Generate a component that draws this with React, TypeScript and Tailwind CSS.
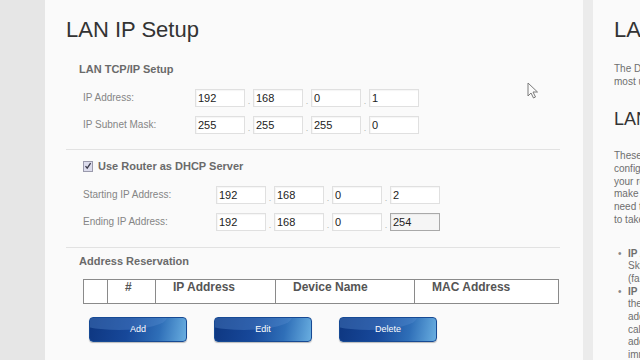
import React from "react";

// ── Data ────────────────────────────────────────────────────────────────

const FONT = { fontFamily: '"Liberation Sans", Arial, sans-serif' };

const lanRows = [
  { label: "IP Address:", values: ["192", "168", "0", "1"] },
  { label: "IP Subnet Mask:", values: ["255", "255", "255", "0"] },
];

const dhcpRows = [
  { label: "Starting IP Address:", values: ["192", "168", "0", "2"] },
  { label: "Ending IP Address:", values: ["192", "168", "0", "254"], focused: true },
];

const helpIntro = ["The Default LAN settings suit", "most users and rarely need edits."];

const helpLan = [
  "These settings are used to",
  "configure the LAN side of",
  "your router. Be sure you",
  "make a change only if you",
  "need to, and allow some time",
  "to take effect on your network.",
];

const helpBullets: { head: string; lines: string[] }[] = [
  {
    head: "IP Address. The LAN IP address",
    lines: ["Skip this unless you need it", "(factory default is 192.168.1.1)."],
  },
  {
    head: "IP Subnet Mask. The subnet mask",
    lines: [
      "the router uses. Combined with the",
      "address, it lets each device",
      "calculate which other IP",
      "addresses are local, so traffic",
      "immediately goes the right way.",
    ],
  },
];

// ── Pieces ──────────────────────────────────────────────────────────────

function IpField({ value, focused }: { value: string; focused?: boolean }) {
  return (
    <div
      className={`h-[18px] w-[50px] border pl-[2px] text-[11px] leading-[16px] text-[#222] shadow-[inset_1px_1px_1px_rgba(0,0,0,0.04)] ${
        focused ? "border-[#a9a9a9] bg-[#f5f5f5]" : "border-[#e0e0e0] bg-white"
      }`}
    >
      {value}
    </div>
  );
}

function IpRow({
  label,
  values,
  labelWidth,
  focused,
}: {
  label: string;
  values: string[];
  labelWidth: string;
  focused?: boolean;
}) {
  return (
    <div className="flex items-center">
      <div className={`${labelWidth} text-[10px] leading-[14px] text-[#858585]`}>{label}</div>
      <div className="flex items-end">
        {values.map((v, i) => (
          <React.Fragment key={i}>
            {i > 0 && <span className="w-[8px] text-center text-[9px] leading-[12px] text-[#b0b0b0]">.</span>}
            <IpField value={v} focused={focused && i === values.length - 1} />
          </React.Fragment>
        ))}
      </div>
    </div>
  );
}

function BlueButton({ label }: { label: string }) {
  return (
    <button className="relative h-[25px] w-[98px] overflow-hidden rounded-[4px] border border-[#174a94] bg-[linear-gradient(100deg,#0e3781_0%,#17489a_40%,#2f6fb8_72%,#69aee0_100%)] text-[9px] text-white shadow-[0_1px_1px_rgba(0,0,0,0.25)]">
      <span className="absolute left-[-20%] top-[-60%] h-[110%] w-[100%] rounded-[50%] bg-[#5c8fd0]/35" />
      <span className="relative">{label}</span>
    </button>
  );
}

function Cursor() {
  return (
    <svg className="absolute left-[527px] top-[82px]" width="12" height="17" viewBox="0 0 12 17">
      <path
        d="M1 1 L1 14 L4 11 L6.5 16 L8.5 15 L6 10 L10.5 10 Z"
        fill="#fafafa"
        stroke="#7a7a7a"
        strokeWidth="1"
        strokeLinejoin="round"
      />
    </svg>
  );
}

// ── Component ───────────────────────────────────────────────────────────

export default function App() {
  return (
    <div className="relative flex h-[360px] w-[640px] overflow-hidden bg-[#e8e8e8]" style={FONT}>
      {/* left gutter */}
      <div className="w-[45px] shrink-0 bg-[#e6e6e6]" />

      {/* Main form panel */}
      <div className="w-[538px] shrink-0 bg-[#fafafa] pl-[21px] pr-[23px] pt-[17px]">
        <h1 className="text-[22px] leading-[26px] text-[#333]">LAN IP Setup</h1>

        <div className="ml-[13px] mt-[19px] text-[11px] font-bold leading-[14px] text-[#6a6a6a]">LAN TCP/IP Setup</div>
        <div className="ml-[17px] mt-[13px] flex flex-col gap-[9px]">
          {lanRows.map((r) => (
            <IpRow key={r.label} label={r.label} values={r.values} labelWidth="w-[112px]" />
          ))}
        </div>

        <div className="mt-[15px] h-px bg-[#e2e2e2]" />

        <div className="ml-[17px] mt-[9px] flex items-center gap-[5px]">
          <span className="flex h-[11px] w-[10px] items-center justify-center border border-[#9a9aac] bg-[#dcdcec]">
            <svg width="8" height="8" viewBox="0 0 8 8">
              <path d="M1.5 4.2 L3.2 6.2 L6.6 1.2" fill="none" stroke="#3a3a4a" strokeWidth="1.3" />
            </svg>
          </span>
          <span className="text-[11px] font-bold leading-[14px] text-[#6a6a6a]">Use Router as DHCP Server</span>
        </div>
        <div className="ml-[17px] mt-[13px] flex flex-col gap-[9px]">
          {dhcpRows.map((r) => (
            <IpRow key={r.label} label={r.label} values={r.values} labelWidth="w-[133px]" focused={r.focused} />
          ))}
        </div>

        <div className="mt-[16px] h-px bg-[#e2e2e2]" />

        <div className="ml-[13px] mt-[6px] text-[11px] font-bold leading-[14px] text-[#6a6a6a]">Address Reservation</div>

        <table className="ml-[17px] mt-[11px] w-[476px] border-collapse text-[12px] font-bold text-[#555]">
          <thead>
            <tr className="h-[24px]">
              <th className="w-[24px] border border-[#8a8a8a] bg-white" />
              <th className="w-[48px] border border-[#8a8a8a] bg-white pb-[6px] pl-[17px] text-left align-top leading-[14px]">#</th>
              <th className="w-[120px] border border-[#8a8a8a] bg-white pb-[6px] pl-[17px] text-left align-top leading-[14px]">IP Address</th>
              <th className="w-[139px] border border-[#8a8a8a] bg-white pb-[6px] pl-[17px] text-left align-top leading-[14px]">Device Name</th>
              <th className="border border-[#8a8a8a] bg-white pb-[6px] pl-[17px] text-left align-top leading-[14px]">MAC Address</th>
            </tr>
          </thead>
        </table>

        <div className="ml-[23px] mt-[13px] flex gap-[27px]">
          <BlueButton label="Add" />
          <BlueButton label="Edit" />
          <BlueButton label="Delete" />
        </div>
      </div>

      {/* gap between panels */}
      <div className="w-[10px] shrink-0 bg-[#ebebeb]" />

      {/* Help panel (cut off at the right edge) */}
      <div className="flex-1 overflow-hidden bg-[#fafafa] pl-[21px] pt-[17px]">
        <div className="w-[220px] whitespace-nowrap">
          <div className="text-[22px] leading-[26px] text-[#333]">LAN IP Setup</div>
          <div className="mt-[19px] text-[10px] leading-[13px] text-[#6e6e6e]">
            {helpIntro.map((l) => (
              <div key={l}>{l}</div>
            ))}
          </div>
          <div className="mt-[20px] text-[18px] leading-[22px] text-[#333]">LAN TCP/IP Setup</div>
          <div className="mt-[20px] text-[10px] leading-[12.75px] text-[#6e6e6e]">
            {helpLan.map((l) => (
              <div key={l}>{l}</div>
            ))}
          </div>
          <ul className="mt-[21px] text-[10px] leading-[12.7px] text-[#6e6e6e]">
            {helpBullets.map((b) => (
              <li key={b.head} className="flex">
                <span className="w-[14px] pl-[4px] text-[#888]">•</span>
                <div>
                  <div>
                    <span className="font-bold">{b.head.split(".")[0]}.</span>
                    {b.head.slice(b.head.indexOf(".") + 1)}
                  </div>
                  {b.lines.map((l) => (
                    <div key={l}>{l}</div>
                  ))}
                </div>
              </li>
            ))}
          </ul>
        </div>
      </div>

      <Cursor />
    </div>
  );
}
